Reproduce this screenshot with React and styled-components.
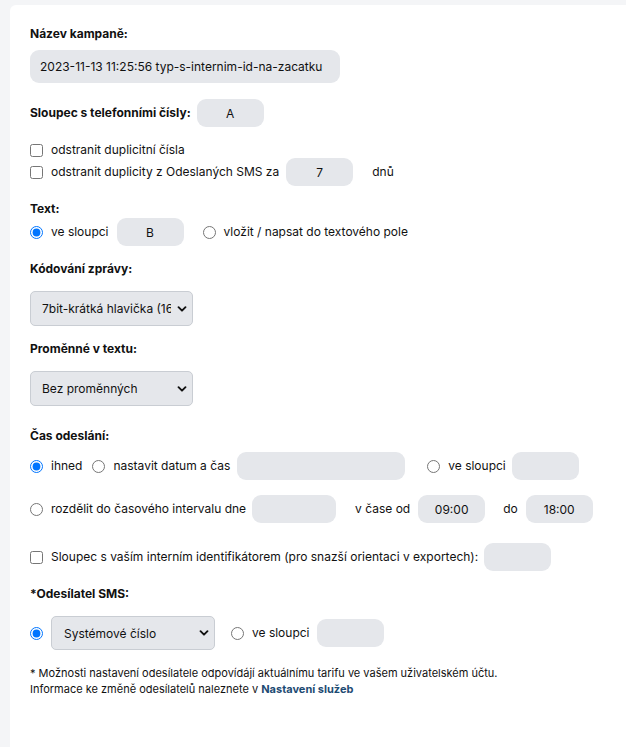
import React from 'react';
import styled, { createGlobalStyle } from 'styled-components';

const GlobalStyle = createGlobalStyle`
  html, body {
    margin: 0;
    padding: 0;
    background: #f4f5f7;
  }
  body {
    font-family: Inter, "Noto Sans", "Liberation Sans", sans-serif;
    color: #111;
    font-size: 12px;
  }
`;

const Card = styled.div`
  margin: 5px 0 0 10px;
  min-height: 742px;
  box-sizing: border-box;
  background: #fff;
  border-top-left-radius: 6px;
  padding: 21px 20px 20px 20px;
`;

const Label = styled.div`
  font-weight: 700;
  font-size: 12px;
  line-height: 16px;
  margin-top: ${(p) => p.$mt || 0}px;
`;

const Row = styled.div`
  display: flex;
  align-items: center;
  gap: 8px;
  margin-top: ${(p) => p.$mt || 0}px;
  min-height: ${(p) => p.$h || 16}px;
`;

const Text = styled.span`
  font-size: 12px;
  line-height: 16px;
  white-space: nowrap;
  margin-left: ${(p) => p.$ml || 0}px;
`;

const Field = styled.input`
  box-sizing: border-box;
  width: ${(p) => p.$w || 67}px;
  height: ${(p) => p.$h || 28}px;
  border: none;
  border-radius: 9px;
  background: #e5e7eb;
  font-family: inherit;
  font-size: 12px;
  color: #111;
  padding: 0 10px;
  text-align: ${(p) => (p.$left ? 'left' : 'center')};
  margin-left: ${(p) => p.$ml || 0}px;
  outline: none;
`;

const Radio = styled.input.attrs({ type: 'radio' })`
  width: 13px;
  height: 13px;
  margin: 0;
  margin-left: ${(p) => p.$ml || 0}px;
  flex-shrink: 0;
`;

const Check = styled.input.attrs({ type: 'checkbox' })`
  width: 13px;
  height: 13px;
  margin: 0;
  flex-shrink: 0;
`;

const SelectWrap = styled.div`
  position: relative;
  width: ${(p) => p.$w || 163}px;
  height: ${(p) => p.$h || 35}px;
  margin-top: ${(p) => p.$mt || 0}px;
  flex-shrink: 0;
`;

const Select = styled.select`
  appearance: none;
  box-sizing: border-box;
  width: 100%;
  height: 100%;
  border: 1px solid #c9cdd3;
  border-radius: 5px;
  background: #e5e7eb;
  font-family: inherit;
  font-size: 12px;
  color: #111;
  padding: 0 14px 0 ${(p) => p.$pl || 11}px;
  outline: none;
`;

const Chevron = styled.svg`
  position: absolute;
  right: 2px;
  top: 50%;
  width: 10px;
  height: 10px;
  transform: translateY(-50%);
  pointer-events: none;
  background: #e5e7eb;
  padding: 0 4px 0 6px;
`;

const Note = styled.p`
  margin: 15px 0 0;
  font-size: 11px;
  line-height: 16px;
`;

const NoteLink = styled.a`
  color: #1d4b73;
  font-weight: 700;
  text-decoration: none;
`;

function Dropdown({ value, options, w, h, mt, pl }) {
  return (
    <SelectWrap $w={w} $h={h} $mt={mt}>
      <Select defaultValue={value} $pl={pl}>
        {options.map((o) => (
          <option key={o}>{o}</option>
        ))}
      </Select>
      <Chevron viewBox="0 0 10 10">
        <path d="M1.5 3.2 L5 6.7 L8.5 3.2" fill="none" stroke="#111" strokeWidth="1.9" strokeLinecap="round" strokeLinejoin="round" />
      </Chevron>
    </SelectWrap>
  );
}

export default function App() {
  return (
    <>
      <GlobalStyle />
      <Card>
        <Label>Název kampaně:</Label>
        <Row $mt={8}>
          <Field $left $w={310} $h={33} defaultValue="2023-11-13 11:25:56 typ-s-internim-id-na-zacatku" />
        </Row>

        <Row $mt={16} $h={28}>
          <Label>Sloupec s telefonními čísly:</Label>
          <Field defaultValue="A" $ml={-2} />
        </Row>

        <Row $mt={15}>
          <Check />
          <Text>odstranit duplicitní čísla</Text>
        </Row>
        <Row $mt={0} $h={27}>
          <Check />
          <Text>odstranit duplicity z Odeslaných SMS za</Text>
          <Field defaultValue="7" $ml={-1} />
          <Text $ml={11}>dnů</Text>
        </Row>

        <Label $mt={15}>Text:</Label>
        <Row $mt={1} $h={28}>
          <Radio name="text" defaultChecked />
          <Text>ve sloupci</Text>
          <Field defaultValue="B" />
          <Radio name="text" $ml={11} />
          <Text>vložit / napsat do textového pole</Text>
        </Row>

        <Label $mt={15}>Kódování zprávy:</Label>
        <Dropdown
          mt={14}
          value="7bit-krátká hlavička (160 znaků)"
          options={['7bit-krátká hlavička (160 znaků)', '8bit', 'UCS-2 (70 znaků)']}
        />

        <Label $mt={15}>Proměnné v textu:</Label>
        <Dropdown mt={14} value="Bez proměnných" options={['Bez proměnných', 'Se proměnnými']} />

        <Label $mt={22}>Čas odeslání:</Label>
        <Row $mt={8} $h={28}>
          <Radio name="time" defaultChecked />
          <Text>ihned</Text>
          <Radio name="time" $ml={2} />
          <Text>nastavit datum a čas</Text>
          <Field $w={168} $ml={-1} />
          <Radio name="time" $ml={14} />
          <Text $ml={0}>ve sloupci</Text>
          <Field $ml={-2} />
        </Row>
        <Row $mt={15} $h={28}>
          <Radio name="time" />
          <Text>rozdělit do časového intervalu dne</Text>
          <Field $w={84} $ml={-2} />
          <Text $ml={11}>v čase od</Text>
          <Field defaultValue="09:00" />
          <Text $ml={10}>do</Text>
          <Field defaultValue="18:00" $ml={0} />
        </Row>

        <Row $mt={20} $h={28}>
          <Check />
          <Text>Sloupec s vaším interním identifikátorem (pro snazší orientaci v exportech):</Text>
          <Field $ml={-2} />
        </Row>

        <Label $mt={15}>*Odesílatel SMS:</Label>
        <Row $mt={14} $h={34}>
          <Radio name="sender" defaultChecked />
          <Dropdown
            w={164}
            h={34}
            pl={12}
            value="Systémové číslo"
            options={['Systémové číslo', 'Vlastní číslo']}
          />
          <Radio name="sender" $ml={8} />
          <Text>ve sloupci</Text>
          <Field $ml={-1} />
        </Row>

        <Note>
          * Možnosti nastavení odesílatele odpovídájí aktuálnímu tarifu ve vašem uživatelském účtu.
          <br />
          Informace ke změně odesílatelů naleznete v <NoteLink href="#">Nastavení služeb</NoteLink>
        </Note>
      </Card>
    </>
  );
}
